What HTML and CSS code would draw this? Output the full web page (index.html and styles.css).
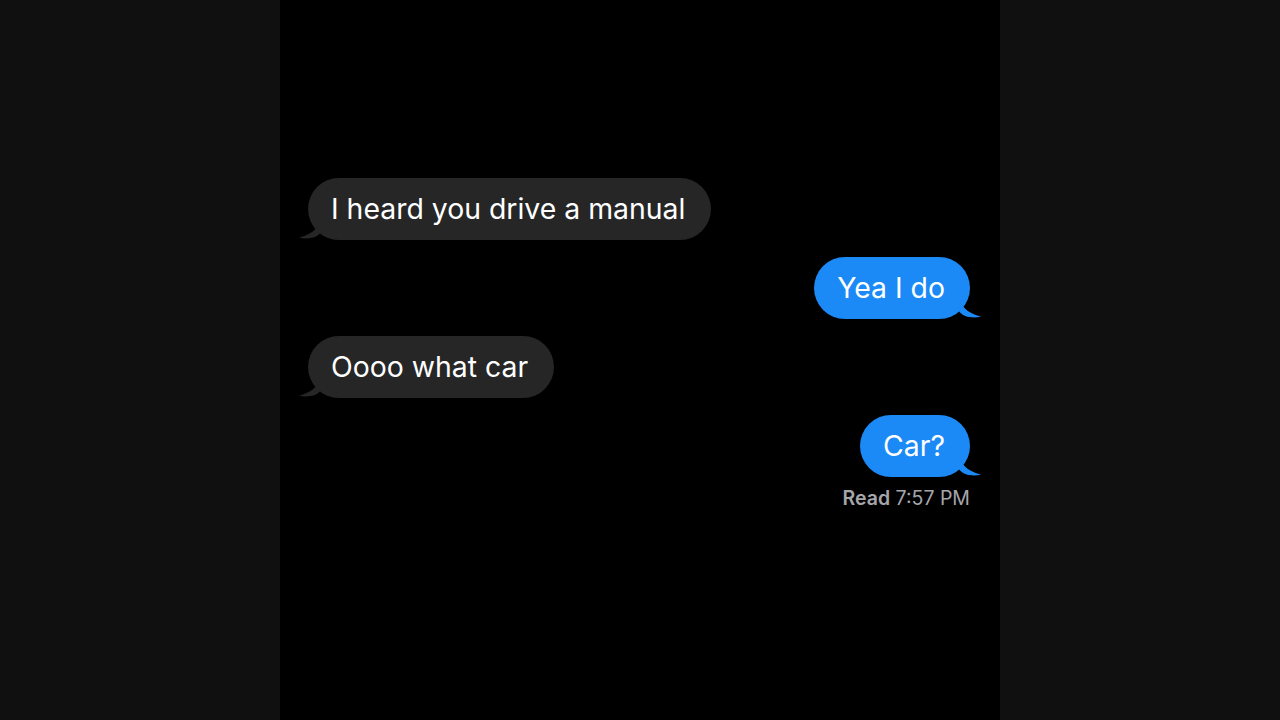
FILE: index.html
```html
<!DOCTYPE html>
<html>
<head>
<meta charset="utf-8">
<link rel="stylesheet" href="styles.css">
</head>
<body>
<div class="screen">
  <div class="chat">
    <div class="row in">
      <div class="bubble gray">I heard you drive a manual
        <svg class="tail tail-left" width="22" height="22" viewBox="0 0 20 20"><path d="M20 0 C18 8 14 14 0 18 C8 19.5 16 18.5 20 13 Z" fill="#262627"/></svg>
      </div>
    </div>
    <div class="row out">
      <div class="bubble blue">Yea I do
        <svg class="tail tail-right" width="22" height="22" viewBox="0 0 20 20"><path d="M0 0 C2 8 6 14 20 18 C12 19.5 4 18.5 0 13 Z" fill="#1b8af6"/></svg>
      </div>
    </div>
    <div class="row in">
      <div class="bubble gray">Oooo what car
        <svg class="tail tail-left" width="22" height="22" viewBox="0 0 20 20"><path d="M20 0 C18 8 14 14 0 18 C8 19.5 16 18.5 20 13 Z" fill="#262627"/></svg>
      </div>
    </div>
    <div class="row out">
      <div class="bubble blue">Car?
        <svg class="tail tail-right" width="22" height="22" viewBox="0 0 20 20"><path d="M0 0 C2 8 6 14 20 18 C12 19.5 4 18.5 0 13 Z" fill="#1b8af6"/></svg>
      </div>
    </div>
    <div class="receipt"><b>Read</b> 7:57 PM</div>
  </div>
</div>
</body>
</html>
```

FILE: styles.css
```css
html, body {
  margin: 0;
  padding: 0;
  background: #101010;
  height: 100%;
}
.screen {
  width: 720px;
  height: 720px;
  margin: 0 auto;
  background: #000;
}
.chat {
  display: flex;
  flex-direction: column;
  gap: 17px;
  padding: 178px 30px 0 28px;
  font-family: "Inter", "Liberation Sans", sans-serif;
}
.row {
  display: flex;
}
.row.out {
  justify-content: flex-end;
}
.bubble {
  position: relative;
  height: 62px;
  line-height: 62px;
  padding: 0 26px 0 23px;
  border-radius: 31px;
  font-size: 28.4px;
  color: #fff;
  box-sizing: border-box;
  white-space: nowrap;
}
.bubble.gray {
  background: #262627;
}
.bubble.blue {
  background: #1b8af6;
  padding: 0 25px 0 23px;
}
.tail {
  position: absolute;
  bottom: 0;
}
.tail-left {
  left: -9px;
}
.tail-right {
  right: -11px;
}
.receipt {
  margin-top: -8px;
  text-align: right;
  font-size: 19.5px;
  color: #a6a6ab;
}
.receipt b {
  font-weight: 600;
}
```
